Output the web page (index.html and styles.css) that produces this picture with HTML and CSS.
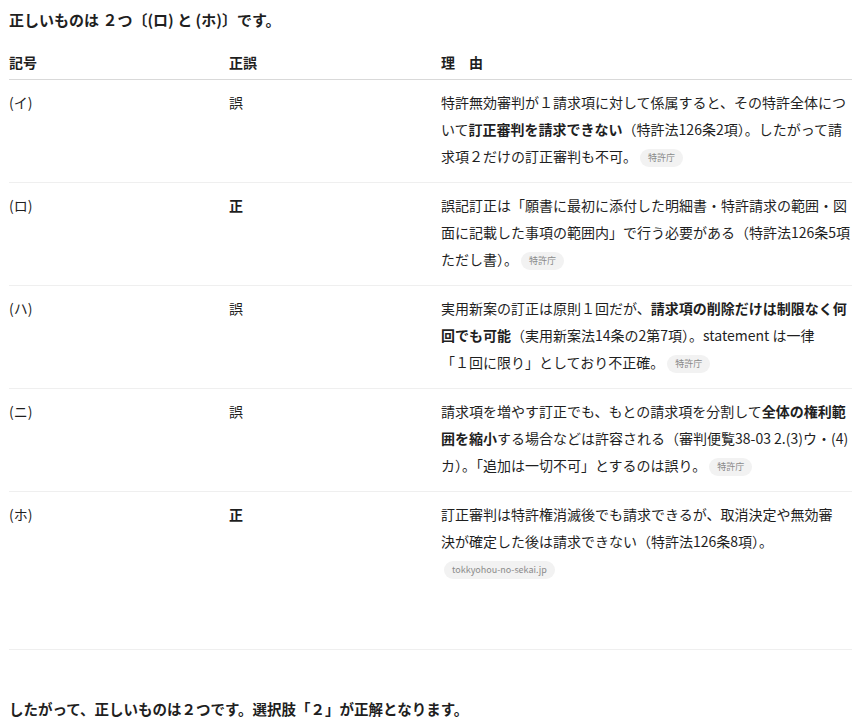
FILE: index.html
```html
<!DOCTYPE html>
<html lang="ja">
<head>
<meta charset="utf-8">
<title>訂正審判</title>
<link rel="stylesheet" href="styles.css">
</head>
<body>
<div class="page">
  <p class="title">正しいものは ２つ〔(ロ) と (ホ)〕です。</p>
  <table class="answer">
    <colgroup>
      <col class="c-sym">
      <col class="c-tf">
      <col class="c-why">
    </colgroup>
    <thead>
      <tr><th>記号</th><th>正誤</th><th>理　由</th></tr>
    </thead>
    <tbody>
      <tr>
        <td>(イ)</td>
        <td>誤</td>
        <td>特許無効審判が１請求項に対して係属すると、その特許全体について<b>訂正審判を請求できない</b>（特許法126条2項）。したがって請求項２だけの訂正審判も不可。<span class="src">特許庁</span></td>
      </tr>
      <tr>
        <td>(ロ)</td>
        <td><b>正</b></td>
        <td>誤記訂正は「願書に最初に添付した明細書・特許請求の範囲・図面に記載した事項の範囲内」で行う必要がある（特許法126条5項ただし書）。<span class="src">特許庁</span></td>
      </tr>
      <tr>
        <td>(ハ)</td>
        <td>誤</td>
        <td>実用新案の訂正は原則１回だが、<b>請求項の削除だけは制限なく何回でも可能</b>（実用新案法14条の2第7項）。statement は一律<span class="nw">「１回に限り」</span>としており不正確。<span class="src">特許庁</span></td>
      </tr>
      <tr>
        <td>(ニ)</td>
        <td>誤</td>
        <td>請求項を増やす訂正でも、もとの請求項を分割して<b>全体の権利範囲を縮小</b>する場合などは許容される（審判便覧38-03 2.(3)ウ・(4)カ）。「追加は一切不可」とするのは誤り。<span class="src">特許庁</span></td>
      </tr>
      <tr>
        <td>(ホ)</td>
        <td><b>正</b></td>
        <td>訂正審判は特許権消滅後でも請求できるが、取消決定や無効審<br>決が確定した後は請求できない（特許法126条8項）。<span class="src">tokkyohou-no-sekai.jp</span></td>
      </tr>
    </tbody>
  </table>
  <hr class="rule">
  <p class="conclusion">したがって、正しいものは２つです。選択肢「２」が正解となります。</p>
</div>
</body>
</html>
```

FILE: styles.css
```css
html, body {
  margin: 0;
  padding: 0;
  background: #ffffff;
}

body {
  font-family: "Noto Sans CJK JP", "Noto Sans", sans-serif;
  color: #1f1f1f;
  font-size: 14px;
}

.page {
  margin: 0 13px 0 9px;
  padding-top: 9px;
}

.title {
  margin: 0;
  font-size: 15px;
  font-weight: 700;
  line-height: 22px;
}

.answer {
  width: 100%;
  border-collapse: collapse;
  table-layout: fixed;
  margin-top: 18px;
}

.c-sym { width: 220px; }
.c-tf { width: 212px; }

.answer th {
  text-align: left;
  font-weight: 700;
  font-size: 14px;
  line-height: 26px;
  padding: 0 0 4px 0;
  border-bottom: 1px solid #d9d9d9;
}

.answer td {
  vertical-align: top;
  line-height: 27px;
  padding: 9px 0 12px 0;
  border-bottom: 1px solid #efefef;
}

.answer tbody tr:last-child td {
  border-bottom: none;
}

.answer b {
  font-weight: 700;
}

.nw {
  white-space: nowrap;
}

.src {
  display: inline-block;
  margin-left: 3px;
  padding: 0 8px;
  height: 18px;
  line-height: 18px;
  font-size: 9px;
  color: #8a8a8a;
  background: #f2f2f2;
  border-radius: 9px;
  vertical-align: middle;
}

.rule {
  margin: 55px 0 0 0;
  border: none;
  border-top: 1px solid #efefef;
  height: 0;
}

.conclusion {
  margin: 47px 0 0 0;
  font-size: 14.5px;
  font-weight: 700;
  line-height: 24px;
}
```
